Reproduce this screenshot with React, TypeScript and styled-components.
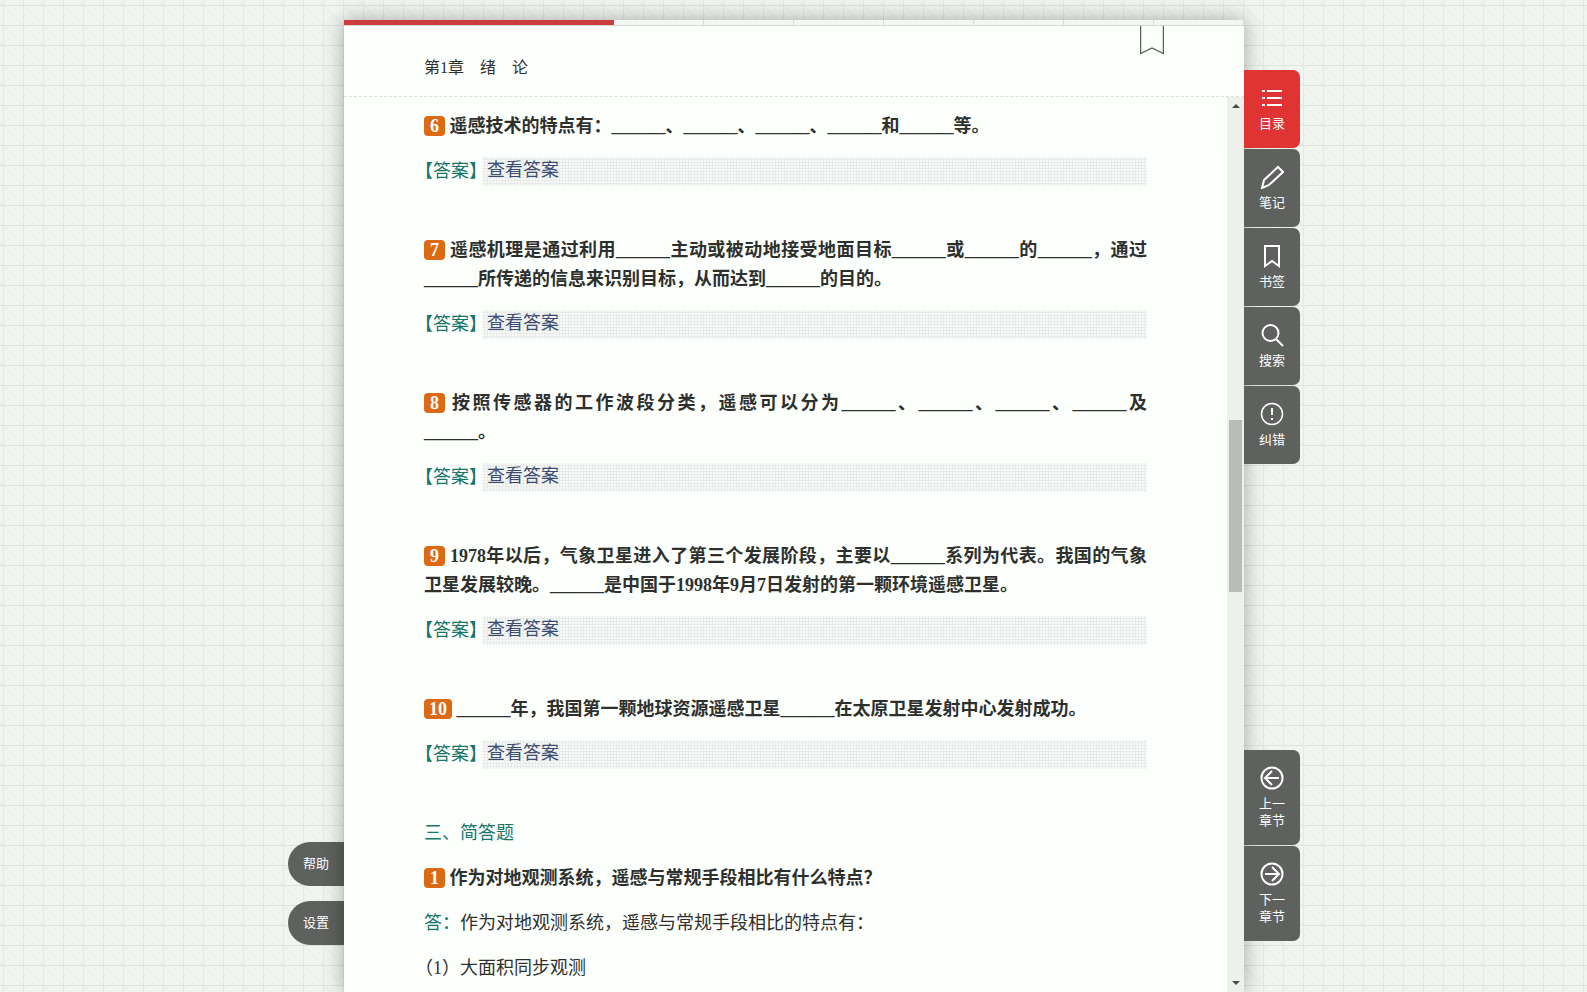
import React from "react";
import styled, { createGlobalStyle } from "styled-components";

const GlobalStyle = createGlobalStyle`
  * { box-sizing: border-box; }
  body {
    margin: 0;
    overflow: hidden;
    color: #2e302e;
    font-family: "Liberation Serif", "Noto Sans CJK SC", serif;
    background-color: #f1f5f1;
    background-image:
      linear-gradient(90deg, transparent 19px, #e2e8e4 19px),
      linear-gradient(transparent 19px, #dde3df 19px),
      linear-gradient(45deg, transparent 47%, #edf0ed 47%, #edf0ed 53%, transparent 53%);
    background-size: 20px 20px;
    background-position: 4px 6px;
  }
  button {
    margin: 0;
    padding: 0;
    border: 0;
    cursor: pointer;
    color: inherit;
    font: inherit;
  }
`;

const Reader = styled.div`
  display: grid;
  grid-template-columns: minmax(56px, 1fr) minmax(0, 900px) minmax(56px, 1fr);
  height: 100vh;
  padding: 20px 0 0 1px;
`;

const LeftRail = styled.nav`
  display: flex;
  flex-direction: column;
  justify-content: flex-end;
  align-items: flex-end;
  gap: 15px;
  padding-bottom: 47px;
`;

const PillButton = styled.button`
  width: 56px;
  height: 44px;
  && { padding-bottom: 3px; }
  border-radius: 22px 0 0 22px;
  background: #5e615e;
  color: #fff;
  font: 13px/17px "Noto Sans CJK SC", sans-serif;
`;

const RightRail = styled.nav`
  display: flex;
  flex-direction: column;
  justify-content: space-between;
  padding: 50px 0 51px;
`;

const TabGroup = styled.div`
  display: flex;
  flex-direction: column;
  align-items: flex-start;
  gap: 1px;
`;

const TabButton = styled.button<{ $active?: boolean }>`
  display: flex;
  flex-direction: column;
  align-items: center;
  gap: 4px;
  width: 56px;
  && { padding: 16px 14px 17px; }
  border-radius: 0 7px 7px 0;
  background: ${(p) => (p.$active ? "#e03434" : "#5e615e")};
  color: #fff;
  font: 13px/17px "Noto Sans CJK SC", sans-serif;
`;

const TabIcon = styled.svg`
  width: 24px;
  height: 24px;
  fill: none;
  stroke: currentColor;
  stroke-width: 2;
`;

const Sheet = styled.main`
  display: flex;
  flex-direction: column;
  min-height: 0;
  background: #fdfffc;
  box-shadow: 0 0 20px rgba(0, 0, 0, 0.32);
`;

const Progress = styled.div`
  height: 6px;
  border-bottom: 1px solid #d4d8d4;
  background: repeating-linear-gradient(90deg, #f4f6f3 0, #f4f6f3 89px, #d9dcd9 89px, #d9dcd9 90px);
`;

const ProgressFill = styled.div`
  height: 5px;
  background: #cc3c3a;
`;

const Header = styled.header`
  display: flex;
  justify-content: space-between;
  align-items: flex-start;
  height: 71px;
  padding: 0 80px;
  border-bottom: 1px dashed #dde1dd;
`;

const ChapterTitle = styled.h1`
  margin: 30px 0 0;
  font-size: 16px;
  line-height: 24px;
  font-weight: 400;
  white-space: pre;
`;

const BookmarkButton = styled.button`
  display: flex;
  background: none;
`;

const Viewport = styled.div`
  display: flex;
  flex: 1;
  min-height: 0;
`;

const Content = styled.article`
  flex: 1;
  min-width: 0;
  overflow: hidden;
  padding: 15px 80px 0;
  font-size: 18px;
  line-height: 29px;
  text-spacing-trim: trim-start;
`;

const Exercise = styled.section`
  margin-bottom: 50px;
`;

const Question = styled.p`
  margin: 0 0 16px;
  font-weight: 700;
  text-align: justify;
`;

const Badge = styled.span`
  display: inline-block;
  min-width: 21px;
  padding: 0 5px;
  border-radius: 4px;
  background: #dc6a14;
  color: #fff;
  line-height: 20px;
  text-align: center;
`;

const AnswerRow = styled.div`
  display: flex;
  gap: 4px;
`;

const Label = styled.span`
  color: #17766a;
`;

const AnswerLabel = styled(Label)`
  text-spacing-trim: space-all;
  font-feature-settings: "halt";
`;

const AnswerButton = styled.button`
  flex: 1;
  height: 29px;
  && { padding: 0 0 2px 5px; }
  text-align: left;
  line-height: 27px;
  color: #3c4c70;
  background-color: #f8faf8;
  background-image:
    linear-gradient(90deg, transparent 2px, #e8ebe9 2px),
    linear-gradient(transparent 2px, #e8ebe9 2px);
  background-size: 3px 3px;
`;

const SectionTitle = styled.h2`
  margin: 0 0 16px;
  font: inherit;
  color: #17766a;
`;

const Paragraph = styled.p`
  margin: 0 0 16px;
`;

const ScrollTrack = styled.div`
  display: flex;
  flex-direction: column;
  align-items: center;
  width: 17px;
  background: #eef0ee;
`;

const ScrollArrow = styled.svg`
  width: 17px;
  height: 17px;
  flex: none;
  fill: #4a4c4a;
`;

const ScrollLane = styled.div`
  display: grid;
  grid-template-rows: 306fr 172fr 383fr;
  flex: 1;
  width: 13px;
`;

const ScrollThumb = styled.div`
  grid-row: 2;
  background: #b9bdb9;
`;

const BLANK = "______";

const exercises = [
  { no: 6, text: `遥感技术的特点有：${BLANK}、${BLANK}、${BLANK}、${BLANK}和${BLANK}等。` },
  { no: 7, text: `遥感机理是通过利用${BLANK}主动或被动地接受地面目标${BLANK}或${BLANK}的${BLANK}，通过${BLANK}所传递的信息来识别目标，从而达到${BLANK}的目的。` },
  { no: 8, text: `按照传感器的工作波段分类，遥感可以分为${BLANK}、${BLANK}、${BLANK}、${BLANK}及${BLANK}。` },
  { no: 9, text: `1978年以后，气象卫星进入了第三个发展阶段，主要以${BLANK}系列为代表。我国的气象卫星发展较晚。${BLANK}是中国于1998年9月7日发射的第一颗环境遥感卫星。` },
  { no: 10, text: `${BLANK}年，我国第一颗地球资源遥感卫星${BLANK}在太原卫星发射中心发射成功。` },
];

const tools = [
  { name: "目录", icon: <path d="M2 5h3M7 5h15M2 12h3M7 12h15M2 19h3M7 19h15" /> },
  { name: "笔记", icon: <path d="M2 23l2-8L18 2l5 5L9 20z" /> },
  { name: "书签", icon: <path d="M5 2h14v20l-7-5-7 5z" /> },
  { name: "搜索", icon: <path d="M18.500 10a8 8 0 1 1-16 0 8 8 0 0 1 16 0zM16 16l7 7" /> },
  {
    name: "纠错",
    icon: (
      <>
        <circle cx="12" cy="12" r="10.500" strokeWidth="1.500" />
        <path d="M12 6v7M12 16v2" />
      </>
    ),
  },
];

const pager = [
  { name: "上一章节", arrow: "M19 12H6M12 5l-7 7 7 7" },
  { name: "下一章节", arrow: "M5 12h13M12 5l7 7-7 7" },
];

export default function App() {
  return (
    <>
      <GlobalStyle />
      <Reader>
        <LeftRail>
          <PillButton>帮助</PillButton>
          <PillButton>设置</PillButton>
        </LeftRail>
        <Sheet>
          <Progress>
            <ProgressFill style={{ width: "30%" }} />
          </Progress>
          <Header>
            <ChapterTitle>第1章　绪　论</ChapterTitle>
            <BookmarkButton aria-label="添加书签">
              <svg width="24" height="29" fill="none" stroke="#5c5f5c" strokeWidth="1.300">
                <path d="M.6 0v27.500L12 22l11.400 5.500V0" />
              </svg>
            </BookmarkButton>
          </Header>
          <Viewport>
            <Content>
              {exercises.map((item) => (
                <Exercise key={item.no}>
                  <Question>
                    <Badge>{item.no}</Badge> {item.text}
                  </Question>
                  <AnswerRow>
                    <AnswerLabel>【答案】</AnswerLabel>
                    <AnswerButton>查看答案</AnswerButton>
                  </AnswerRow>
                </Exercise>
              ))}
              <SectionTitle>三、简答题</SectionTitle>
              <Question>
                <Badge>1</Badge> 作为对地观测系统，遥感与常规手段相比有什么特点？
              </Question>
              <Paragraph>
                <Label>答：</Label>作为对地观测系统，遥感与常规手段相比的特点有：
              </Paragraph>
              <Paragraph>（1）大面积同步观测</Paragraph>
            </Content>
            <ScrollTrack>
              <ScrollArrow>
                <path d="M5 11l4-4 4 4z" />
              </ScrollArrow>
              <ScrollLane>
                <ScrollThumb />
              </ScrollLane>
              <ScrollArrow>
                <path d="M5 6l4 4 4-4z" />
              </ScrollArrow>
            </ScrollTrack>
          </Viewport>
        </Sheet>
        <RightRail>
          <TabGroup>
            {tools.map((tool, i) => (
              <TabButton key={tool.name} $active={i === 0}>
                <TabIcon viewBox="0 0 24 24">{tool.icon}</TabIcon>
                {tool.name}
              </TabButton>
            ))}
          </TabGroup>
          <TabGroup>
            {pager.map((item) => (
              <TabButton key={item.name}>
                <TabIcon viewBox="0 0 24 24">
                  <circle cx="12" cy="12" r="10.500" />
                  <path d={item.arrow} />
                </TabIcon>
                {item.name}
              </TabButton>
            ))}
          </TabGroup>
        </RightRail>
      </Reader>
    </>
  );
}
